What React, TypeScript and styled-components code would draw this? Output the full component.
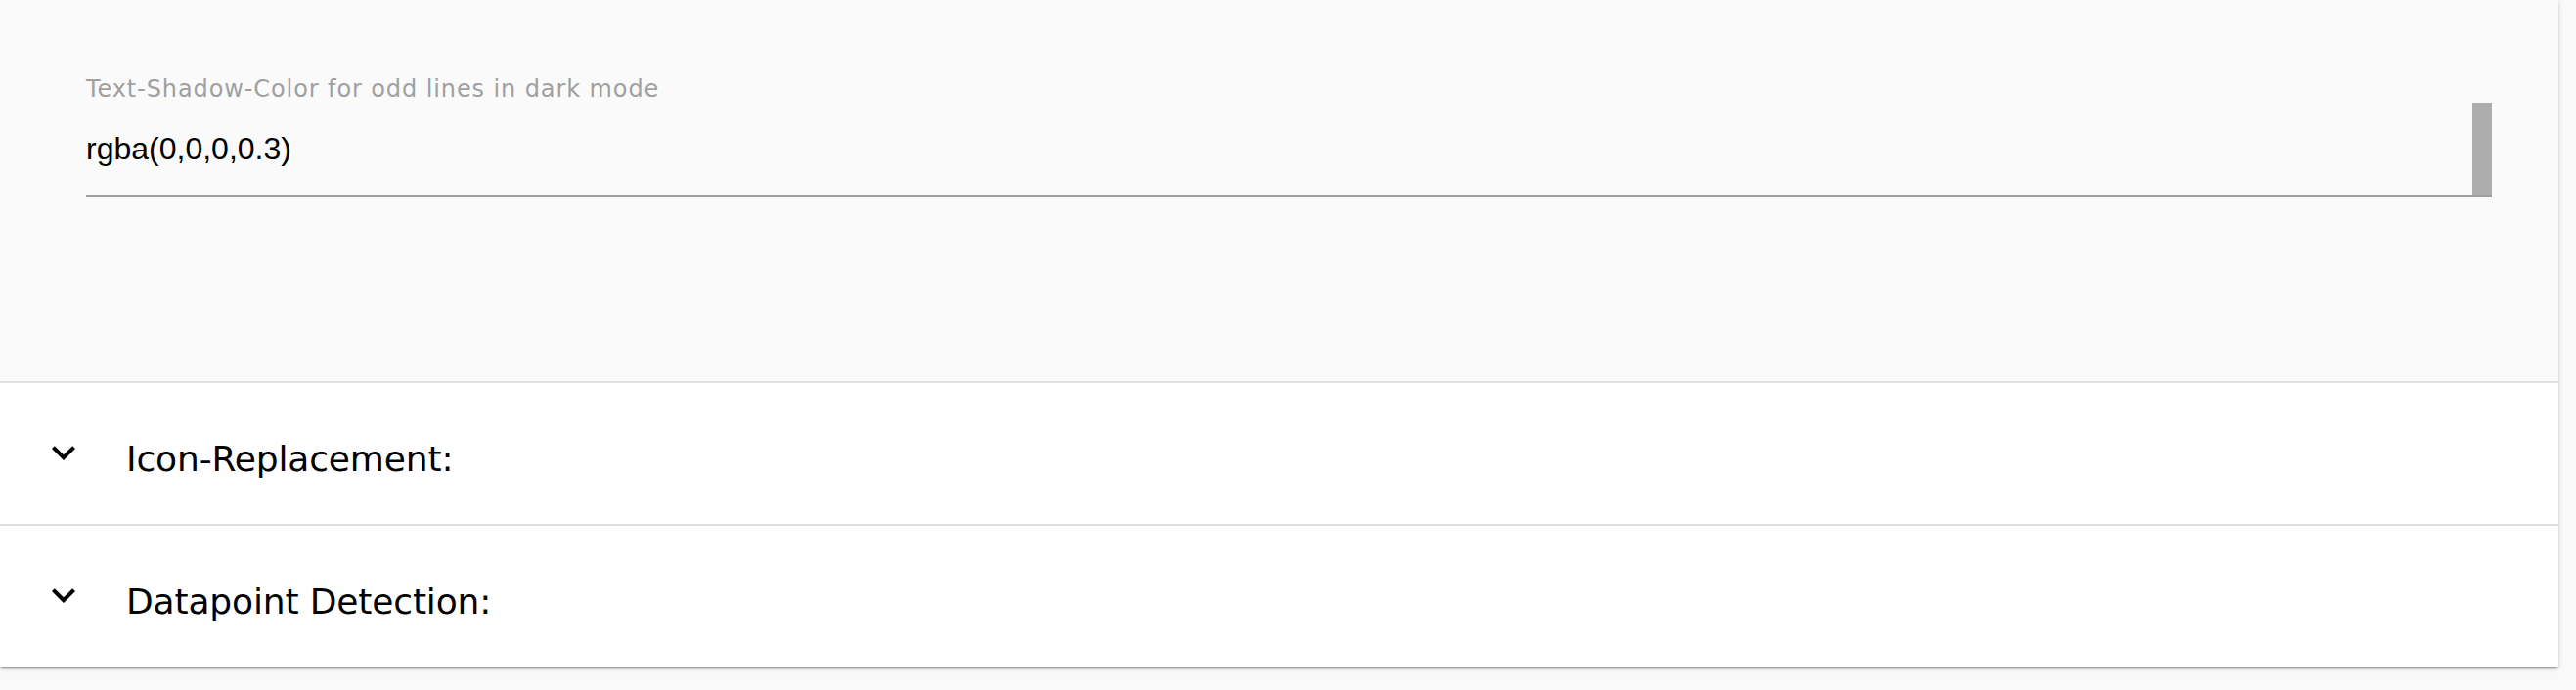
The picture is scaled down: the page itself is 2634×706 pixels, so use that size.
import React from "react";
import styled, { createGlobalStyle } from "styled-components";

const GlobalStyle = createGlobalStyle`
  html, body {
    margin: 0;
    padding: 0;
    background: #f9f9f9;
  }
  body {
    font-family: "DejaVu Sans", "Liberation Sans", sans-serif;
  }
`;

const Page = styled.div`
  width: 2634px;
  height: 706px;
  overflow: hidden;
  padding-right: 18px;
  box-sizing: border-box;
`;

const Card = styled.section`
  background: #ffffff;
  box-shadow: 0 4px 2px -2px rgba(0, 0, 0, 0.2), 0 2px 2px 0 rgba(0, 0, 0, 0.14),
    0 2px 6px 0 rgba(0, 0, 0, 0.12);
  display: flex;
  flex-direction: column;
`;

const Details = styled.div`
  background: #fafafa;
  height: 390px;
  box-sizing: border-box;
  padding: 77px 68px 0 88px;
`;

const Field = styled.div`
  display: flex;
  flex-direction: column;
`;

const Label = styled.label`
  font-family: "DejaVu Sans", sans-serif;
  font-size: 24px;
  letter-spacing: 0.9px;
  line-height: 28px;
  color: #a0a0a0;
  white-space: nowrap;
`;

const InputRow = styled.div`
  display: flex;
  align-items: stretch;
  height: 95px;
  border-bottom: 2px solid #9e9e9e;
`;

const Value = styled.div`
  flex: 1;
  display: flex;
  align-items: center;
  font-family: "Liberation Sans", Arial, sans-serif;
  font-size: 32px;
  color: #000000;
  padding-bottom: 1px;
`;

const ScrollThumb = styled.div`
  width: 20px;
  background: #adadad;
`;

const Summary = styled.div`
  display: flex;
  align-items: center;
  height: 144px;
  border-top: 2px solid #e0e0e0;
  padding-left: 41px;
  gap: 40px;
  background: #ffffff;
`;

const ExpandIcon = styled.svg`
  width: 48px;
  height: 48px;
  flex: none;
  margin-top: -3px;
`;

const Heading = styled.h3`
  margin: 0;
  padding-top: 10px;
  font-family: "DejaVu Sans", sans-serif;
  font-weight: 400;
  font-size: 36px;
  letter-spacing: -0.15px;
  color: #000000;
  white-space: nowrap;
`;

const Chevron = () => (
  <ExpandIcon viewBox="0 0 24 24" aria-hidden="true">
    <path fill="#000" d="M16.59 8.59L12 13.17 7.41 8.59 6 10l6 6 6-6z" />
  </ExpandIcon>
);

const sections = ["Icon-Replacement:", "Datapoint Detection:"];

export default function App() {
  return (
    <>
      <GlobalStyle />
      <Page>
        <Card>
          <Details>
            <Field>
              <Label>Text-Shadow-Color for odd lines in dark mode</Label>
              <InputRow>
                <Value>rgba(0,0,0,0.3)</Value>
                <ScrollThumb />
              </InputRow>
            </Field>
          </Details>
          {sections.map((title) => (
            <Summary key={title}>
              <Chevron />
              <Heading>{title}</Heading>
            </Summary>
          ))}
        </Card>
      </Page>
    </>
  );
}
